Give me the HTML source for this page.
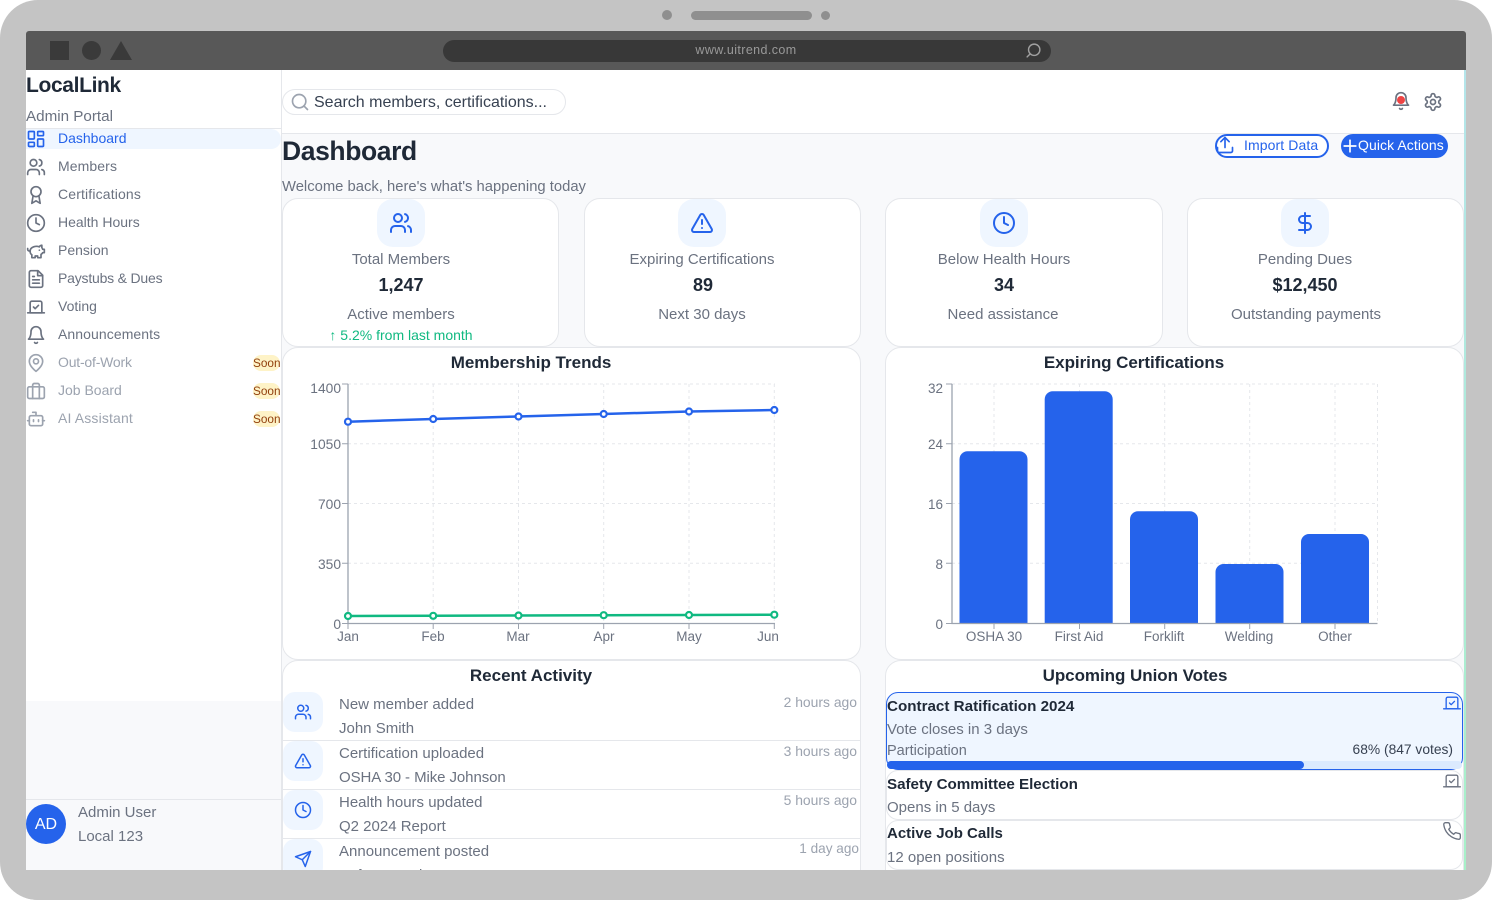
<!DOCTYPE html>
<html lang="en">
<head>
<meta charset="utf-8">
<title>LocalLink Admin Portal</title>
<style>
html,body{margin:0;padding:0;background:#fff;width:1492px;height:900px;overflow:hidden}
body{font-family:"Liberation Sans",sans-serif;position:relative}
#frame{position:absolute;inset:0;background:#c4c4c4;border-radius:38px;overflow:hidden}
.a{position:absolute;box-sizing:border-box}
.t{position:absolute;white-space:nowrap;line-height:20px;margin-top:-10px;font-size:14px;color:#6b7280}
.c{transform:translateX(-50%)}
.i{position:absolute;fill:none;stroke:currentColor;stroke-width:2;stroke-linecap:round;stroke-linejoin:round;overflow:visible}
.nav{font-size:14px;color:#6b7280}
.dim{color:#9ca3af}
.soon{position:absolute;left:253px;width:27px;height:16px;border-radius:8px;background:#fef3c7;color:#92400e;font-size:11.8px;line-height:17px;text-align:center;white-space:nowrap}
.card{position:absolute;box-sizing:border-box;background:#fff;border:1px solid #e5e7eb;border-radius:16px}
.ib{position:absolute;background:#eff6ff;border-radius:16px}
.h{font-weight:700;font-size:17px;color:#1f2937;margin-top:-9px}
.val{font-weight:700;font-size:18px;color:#1f2937}
.s{font-size:15px;margin-top:-9px}
.l{font-size:13.5px;margin-top:-9px}
.time{font-size:13.9px;color:#9ca3af;margin-top:-9px}
.b{font-weight:700;font-size:15.2px;color:#1f2937;margin-top:-9px}
</style>
</head>
<body>
<svg width="0" height="0" style="position:absolute">
<defs>
<symbol id="dash" viewBox="0 0 24 24"><rect x="3" y="3" width="7" height="9" rx="1"/><rect x="14" y="3" width="7" height="5" rx="1"/><rect x="14" y="12" width="7" height="9" rx="1"/><rect x="3" y="16" width="7" height="5" rx="1"/></symbol>
<symbol id="users" viewBox="0 0 24 24"><path d="M16 21v-2a4 4 0 0 0-4-4H6a4 4 0 0 0-4 4v2"/><circle cx="9" cy="7" r="4"/><path d="M22 21v-2a4 4 0 0 0-3-3.87"/><path d="M16 3.13a4 4 0 0 1 0 7.75"/></symbol>
<symbol id="award" viewBox="0 0 24 24"><circle cx="12" cy="8" r="6"/><path d="M15.477 12.89 17 22l-5-3-5 3 1.523-9.11"/></symbol>
<symbol id="clock" viewBox="0 0 24 24"><circle cx="12" cy="12" r="10"/><path d="M12 6v6l4 2"/></symbol>
<symbol id="pig" viewBox="0 0 24 24"><path d="M19 5c-1.5 0-2.8 1.4-3 2-3.5-1.5-11-.3-11 5 0 1.8 0 3 2 4.5V20h4v-2h3v2h4v-4c1-.5 1.7-1 2-2h2v-4h-2c0-1-.5-1.5-1-2V5z"/><path d="M2 9v1c0 1.1.9 2 2 2h1"/><path d="M16 11h.01"/></symbol>
<symbol id="file" viewBox="0 0 24 24"><path d="M14.5 2H6a2 2 0 0 0-2 2v16a2 2 0 0 0 2 2h12a2 2 0 0 0 2-2V7.5L14.5 2z"/><path d="M14 2v6h6"/><path d="M16 13H8"/><path d="M16 17H8"/><path d="M10 9H8"/></symbol>
<symbol id="vote" viewBox="0 0 24 24"><path d="m9 12 2 2 4-4"/><path d="M5 7c0-1.1.9-2 2-2h10a2 2 0 0 1 2 2v12H5V7Z"/><path d="M22 19H2"/></symbol>
<symbol id="bell" viewBox="0 0 24 24"><path d="M6 8a6 6 0 0 1 12 0c0 7 3 9 3 9H3s3-2 3-9"/><path d="M10.3 21a1.94 1.94 0 0 0 3.4 0"/></symbol>
<symbol id="pin" viewBox="0 0 24 24"><path d="M20 10c0 6-8 12-8 12s-8-6-8-12a8 8 0 0 1 16 0Z"/><circle cx="12" cy="10" r="3"/></symbol>
<symbol id="brief" viewBox="0 0 24 24"><rect x="2" y="7" width="20" height="14" rx="2"/><path d="M16 21V5a2 2 0 0 0-2-2h-4a2 2 0 0 0-2 2v16"/></symbol>
<symbol id="bot" viewBox="0 0 24 24"><path d="M12 8V4H8"/><rect x="4" y="8" width="16" height="12" rx="2"/><path d="M2 14h2"/><path d="M20 14h2"/><path d="M15 13v2"/><path d="M9 13v2"/></symbol>
<symbol id="search" viewBox="0 0 24 24"><circle cx="11" cy="11" r="8"/><path d="m21 21-4.3-4.3"/></symbol>
<symbol id="alert" viewBox="0 0 24 24"><path d="m21.73 18-8-14a2 2 0 0 0-3.48 0l-8 14A2 2 0 0 0 4 21h16a2 2 0 0 0 1.73-3Z"/><path d="M12 9v4"/><path d="M12 17h.01"/></symbol>
<symbol id="dollar" viewBox="0 0 24 24"><path d="M12 2v20"/><path d="M17 5H9.5a3.5 3.5 0 0 0 0 7h5a3.5 3.5 0 0 1 0 7H6"/></symbol>
<symbol id="send" viewBox="0 0 24 24"><path d="m22 2-7 20-4-9-9-4Z"/><path d="M22 2 11 13"/></symbol>
<symbol id="phone" viewBox="0 0 24 24"><path d="M22 16.92v3a2 2 0 0 1-2.18 2 19.79 19.79 0 0 1-8.63-3.07 19.5 19.5 0 0 1-6-6 19.79 19.79 0 0 1-3.07-8.67A2 2 0 0 1 4.11 2h3a2 2 0 0 1 2 1.72 12.84 12.84 0 0 0 .7 2.81 2 2 0 0 1-.45 2.11L8.09 9.91a16 16 0 0 0 6 6l1.27-1.27a2 2 0 0 1 2.11-.45 12.84 12.84 0 0 0 2.81.7A2 2 0 0 1 22 16.92z"/></symbol>
<symbol id="gear" viewBox="0 0 24 24"><path d="M12.22 2h-.44a2 2 0 0 0-2 2v.18a2 2 0 0 1-1 1.73l-.43.25a2 2 0 0 1-2 0l-.15-.08a2 2 0 0 0-2.73.73l-.22.38a2 2 0 0 0 .73 2.73l.15.1a2 2 0 0 1 1 1.72v.51a2 2 0 0 1-1 1.74l-.15.09a2 2 0 0 0-.73 2.73l.22.38a2 2 0 0 0 2.73.73l.15-.08a2 2 0 0 1 2 0l.43.25a2 2 0 0 1 1 1.73V20a2 2 0 0 0 2 2h.44a2 2 0 0 0 2-2v-.18a2 2 0 0 1 1-1.73l.43-.25a2 2 0 0 1 2 0l.15.08a2 2 0 0 0 2.73-.73l.22-.39a2 2 0 0 0-.73-2.73l-.15-.08a2 2 0 0 1-1-1.74v-.5a2 2 0 0 1 1-1.74l.15-.09a2 2 0 0 0 .73-2.73l-.22-.38a2 2 0 0 0-2.73-.73l-.15.08a2 2 0 0 1-2 0l-.43-.25a2 2 0 0 1-1-1.73V4a2 2 0 0 0-2-2z"/><circle cx="12" cy="12" r="3"/></symbol>
<symbol id="upload" viewBox="0 0 24 24"><path d="M21 15v4a2 2 0 0 1-2 2H5a2 2 0 0 1-2-2v-4"/><path d="m17 8-5-5-5 5"/><path d="M12 3v12"/></symbol>
<symbol id="plus" viewBox="0 0 24 24"><path d="M5 12h14"/><path d="M12 5v14"/></symbol>
</defs>
</svg>

<div id="frame">
  <!-- device chrome -->
  <div class="a" style="left:662px;top:10px;width:10px;height:10px;border-radius:50%;background:#8f8f8f"></div>
  <div class="a" style="left:691px;top:11px;width:121px;height:9px;border-radius:5px;background:#8f8f8f"></div>
  <div class="a" style="left:821px;top:11px;width:9px;height:9px;border-radius:50%;background:#8f8f8f"></div>
  <div class="a" style="left:26px;top:31px;width:1440px;height:39px;background:#585858;border-radius:3px 3px 0 0"></div>
  <div class="a" style="left:50px;top:41px;width:19px;height:19px;background:#3a3a3a"></div>
  <div class="a" style="left:82px;top:41px;width:19px;height:19px;border-radius:50%;background:#3a3a3a"></div>
  <svg class="a" style="left:110px;top:41px" width="22" height="19"><path d="M11 0 22 19H0Z" fill="#3a3a3a"/></svg>
  <div class="a" style="left:443px;top:40px;width:608px;height:22px;border-radius:11px;background:#383838"></div>
  <div class="t c" style="left:746px;top:50px;font-size:12.5px;color:#999;letter-spacing:.4px">www.uitrend.com</div>
  <svg class="i" style="left:1025px;top:42px;color:#a0a0a0;stroke-width:2;transform:scaleX(-1)" width="17" height="17"><use href="#search"/></svg>

  <!-- app -->
  <div class="a" style="left:26px;top:70px;width:1440px;height:800px;background:linear-gradient(#b5e5ea,#a8f0c8)"></div>
  <div class="a" style="left:282px;top:70px;width:1182px;height:800px;background:#f8f9fb"></div>

  <!-- sidebar -->
  <div class="a" style="left:26px;top:70px;width:255px;height:631px;background:#fff"></div>
  <div class="a" style="left:26px;top:701px;width:255px;height:169px;background:#f8f9fb"></div>
  <div class="a" style="left:281px;top:70px;width:1px;height:800px;background:#e5e7eb"></div>
  <div class="t" style="left:26px;top:86px;font-size:21px;font-weight:700;color:#1f2937;letter-spacing:-.35px">LocalLink</div>
  <div class="t" style="left:26px;top:116px;font-size:15.2px;margin-top:-9px;color:#6b7280">Admin Portal</div>
  <div class="a" style="left:26px;top:128px;width:255px;height:1px;background:#e5e7eb"></div>
  <div class="a" style="left:26px;top:129px;width:255px;height:20px;background:#eff6ff;border-radius:0 10px 10px 0"></div>

  <svg class="i" style="left:26px;top:129px;color:#2563eb" width="20" height="20"><use href="#dash"/></svg>
  <div class="t nav" style="left:58px;top:138px;color:#2563eb">Dashboard</div>
  <svg class="i" style="left:26px;top:157px;color:#6b7280" width="20" height="20"><use href="#users"/></svg>
  <div class="t nav" style="left:58px;top:166px;letter-spacing:.1px">Members</div>
  <svg class="i" style="left:26px;top:185px;color:#6b7280" width="20" height="20"><use href="#award"/></svg>
  <div class="t nav" style="left:58px;top:194px;letter-spacing:.15px">Certifications</div>
  <svg class="i" style="left:26px;top:213px;color:#6b7280" width="20" height="20"><use href="#clock"/></svg>
  <div class="t nav" style="left:58px;top:222px">Health Hours</div>
  <svg class="i" style="left:26px;top:241px;color:#6b7280" width="20" height="20"><use href="#pig"/></svg>
  <div class="t nav" style="left:58px;top:250px">Pension</div>
  <svg class="i" style="left:26px;top:269px;color:#6b7280" width="20" height="20"><use href="#file"/></svg>
  <div class="t nav" style="left:58px;top:278px;letter-spacing:-.2px">Paystubs &amp; Dues</div>
  <svg class="i" style="left:26px;top:297px;color:#6b7280" width="20" height="20"><use href="#vote"/></svg>
  <div class="t nav" style="left:58px;top:306px">Voting</div>
  <svg class="i" style="left:26px;top:325px;color:#6b7280" width="20" height="20"><use href="#bell"/></svg>
  <div class="t nav" style="left:58px;top:334px;letter-spacing:.08px">Announcements</div>
  <svg class="i" style="left:26px;top:353px;color:#9ca3af" width="20" height="20"><use href="#pin"/></svg>
  <div class="t nav dim" style="left:58px;top:362px;letter-spacing:-.2px">Out-of-Work</div>
  <div class="soon" style="top:355px">Soon</div>
  <svg class="i" style="left:26px;top:381px;color:#9ca3af" width="20" height="20"><use href="#brief"/></svg>
  <div class="t nav dim" style="left:58px;top:390px">Job Board</div>
  <div class="soon" style="top:383px">Soon</div>
  <svg class="i" style="left:26px;top:409px;color:#9ca3af" width="20" height="20"><use href="#bot"/></svg>
  <div class="t nav dim" style="left:58px;top:418px;letter-spacing:.15px">AI Assistant</div>
  <div class="soon" style="top:411px">Soon</div>

  <div class="a" style="left:26px;top:799px;width:255px;height:1px;background:#e5e7eb"></div>
  <div class="a" style="left:26px;top:804px;width:40px;height:40px;border-radius:50%;background:#2563eb;color:#fff;font-size:16px;line-height:41px;text-align:center">AD</div>
  <div class="t s" style="left:78px;top:812px">Admin User</div>
  <div class="t s" style="left:78px;top:836px">Local 123</div>

  <!-- top bar -->
  <div class="a" style="left:282px;top:70px;width:1182px;height:64px;background:#fff;border-bottom:1px solid #e5e7eb"></div>
  <div class="a" style="left:282px;top:89px;width:284px;height:26px;border:1px solid #e5e7eb;border-radius:13px;background:#fff"></div>
  <svg class="i" style="left:290px;top:92px;color:#9ca3af" width="20" height="20"><use href="#search"/></svg>
  <div class="t" style="left:314px;top:102px;font-size:16px;margin-top:-9px;color:#374151">Search members, certifications...</div>
  <svg class="i" style="left:1391px;top:91px;color:#6b7280" width="20" height="20"><use href="#bell"/></svg>
  <div class="a" style="left:1397px;top:96px;width:8px;height:8px;border-radius:50%;background:#ef4444"></div>
  <svg class="i" style="left:1423px;top:92px;color:#6b7280" width="20" height="20"><use href="#gear"/></svg>

  <!-- page heading -->
  <div class="t" style="left:282px;top:151px;font-size:26.5px;font-weight:700;color:#1f2937;letter-spacing:-.4px">Dashboard</div>
  <div class="t" style="left:282px;top:186px;font-size:14.8px;margin-top:-9px">Welcome back, here's what's happening today</div>
  <div class="a" style="left:1215px;top:134px;width:114px;height:24px;border:2px solid #2563eb;border-radius:12px;background:#fff"></div>
  <svg class="i" style="left:1215px;top:135px;color:#2563eb" width="20" height="20"><use href="#upload"/></svg>
  <div class="t" style="left:1244px;top:145px;font-size:14px;color:#2563eb;letter-spacing:.1px">Import Data</div>
  <div class="a" style="left:1341px;top:134px;width:107px;height:24px;border-radius:12px;background:#2563eb"></div>
  <svg class="i" style="left:1340px;top:136px;color:#fff" width="20" height="20"><use href="#plus"/></svg>
  <div class="t" style="left:1358px;top:145px;font-size:14px;color:#fff;letter-spacing:.08px">Quick Actions</div>

  <!-- stat cards -->
  <div class="card" style="left:282px;top:198px;width:277px;height:149px"></div>
  <div class="card" style="left:584px;top:198px;width:277px;height:149px"></div>
  <div class="card" style="left:885px;top:198px;width:278px;height:149px"></div>
  <div class="card" style="left:1187px;top:198px;width:277px;height:149px"></div>

  <div class="ib" style="left:377px;top:199px;width:48px;height:48px"></div>
  <svg class="i" style="left:389px;top:211px;color:#2563eb" width="24" height="24"><use href="#users"/></svg>
  <div class="t c s" style="left:401px;top:259px">Total Members</div>
  <div class="t c val" style="left:401px;top:285px">1,247</div>
  <div class="t c s" style="left:401px;top:314px">Active members</div>
  <div class="t c" style="left:401px;top:335px;color:#10b981;font-size:14px">↑ 5.2% from last month</div>

  <div class="ib" style="left:678px;top:199px;width:48px;height:48px"></div>
  <svg class="i" style="left:690px;top:211px;color:#2563eb" width="24" height="24"><use href="#alert"/></svg>
  <div class="t c s" style="left:702px;top:259px">Expiring Certifications</div>
  <div class="t c val" style="left:703px;top:285px">89</div>
  <div class="t c s" style="left:702px;top:314px">Next 30 days</div>

  <div class="ib" style="left:980px;top:199px;width:48px;height:48px"></div>
  <svg class="i" style="left:992px;top:211px;color:#2563eb" width="24" height="24"><use href="#clock"/></svg>
  <div class="t c s" style="left:1004px;top:259px">Below Health Hours</div>
  <div class="t c val" style="left:1004px;top:285px">34</div>
  <div class="t c s" style="left:1003px;top:314px">Need assistance</div>

  <div class="ib" style="left:1281px;top:199px;width:48px;height:48px"></div>
  <svg class="i" style="left:1293px;top:211px;color:#2563eb" width="24" height="24"><use href="#dollar"/></svg>
  <div class="t c s" style="left:1305px;top:259px">Pending Dues</div>
  <div class="t c val" style="left:1305px;top:285px">$12,450</div>
  <div class="t c s" style="left:1306px;top:314px">Outstanding payments</div>

  <!-- line chart card -->
  <div class="card" style="left:282px;top:347px;width:579px;height:313px"></div>
  <div class="t c h" style="left:531px;top:362px">Membership Trends</div>
  <svg class="a" style="left:282px;top:347px" width="579" height="313" fill="none">
    <g stroke="#e5e7eb" stroke-dasharray="3 3">
      <path d="M66 37H493M66 96.7H493M66 156.5H493M66 216.3H493"/>
      <path d="M151.2 37V276.5M236.5 37V276.5M321.7 37V276.5M407 37V276.5M492.3 37V276.5"/>
    </g>
    <path d="M66 37V276.5H493" stroke="#9ca3af" stroke-width="1.3"/>
    <path d="M60 37H66M60 96.7H66M60 156.5H66M60 216.3H66M60 276.5H66M66 276.5V282M151.2 276.5V282M236.5 276.5V282M321.7 276.5V282M407 276.5V282M492.3 276.5V282" stroke="#9ca3af"/>
    <path d="M66 74.7 151.2 72 236.5 69.5 321.7 67 407 64.5 492.3 63" stroke="#2563eb" stroke-width="2.5"/>
    <g stroke="#2563eb" stroke-width="2.2" fill="#fff"><circle cx="66" cy="74.7" r="3"/><circle cx="151.2" cy="72" r="3"/><circle cx="236.5" cy="69.5" r="3"/><circle cx="321.7" cy="67" r="3"/><circle cx="407" cy="64.5" r="3"/><circle cx="492.3" cy="63" r="3"/></g>
    <path d="M66 269 151.2 268.8 236.5 268.5 321.7 268.2 407 268 492.3 267.7" stroke="#10b981" stroke-width="2.5"/>
    <g stroke="#10b981" stroke-width="2.2" fill="#fff"><circle cx="66" cy="269" r="3"/><circle cx="151.2" cy="268.8" r="3"/><circle cx="236.5" cy="268.5" r="3"/><circle cx="321.7" cy="268.2" r="3"/><circle cx="407" cy="268" r="3"/><circle cx="492.3" cy="267.7" r="3"/></g>
  </svg>
  <div class="t l" style="right:1151px;top:388px;font-size:13.8px">1400</div>
  <div class="t l" style="right:1151px;top:444px;font-size:13.8px">1050</div>
  <div class="t l" style="right:1151px;top:504px;font-size:13.8px">700</div>
  <div class="t l" style="right:1151px;top:564px;font-size:13.8px">350</div>
  <div class="t l" style="right:1151px;top:624px;font-size:13.8px">0</div>
  <div class="t c l" style="left:348px;top:636px">Jan</div>
  <div class="t c l" style="left:433px;top:636px">Feb</div>
  <div class="t c l" style="left:518px;top:636px">Mar</div>
  <div class="t c l" style="left:604px;top:636px">Apr</div>
  <div class="t c l" style="left:689px;top:636px">May</div>
  <div class="t c l" style="left:768px;top:636px">Jun</div>

  <!-- bar chart card -->
  <div class="card" style="left:885px;top:347px;width:579px;height:313px"></div>
  <div class="t c h" style="left:1134px;top:362px;letter-spacing:-.05px">Expiring Certifications</div>
  <svg class="a" style="left:885px;top:347px" width="579" height="313" fill="none">
    <g stroke="#e5e7eb" stroke-dasharray="3 3">
      <path d="M67 37H492.5M67 96.7H492.5M67 156.5H492.5M67 216.3H492.5"/>
      <path d="M109 37V276.5M194.5 37V276.5M279.7 37V276.5M364.7 37V276.5M450 37V276.5M492.5 37V276.5"/>
    </g>
    <g fill="#2563eb">
      <path d="M74.5 276.5V112.3a8 8 0 0 1 8-8h52a8 8 0 0 1 8 8V276.5Z"/>
      <path d="M159.7 276.5V52.3a8 8 0 0 1 8-8h52a8 8 0 0 1 8 8V276.5Z"/>
      <path d="M245 276.5V172.3a8 8 0 0 1 8-8h52a8 8 0 0 1 8 8V276.5Z"/>
      <path d="M330.5 276.5V225a8 8 0 0 1 8-8h52a8 8 0 0 1 8 8V276.5Z"/>
      <path d="M416 276.5V195a8 8 0 0 1 8-8h52a8 8 0 0 1 8 8V276.5Z"/>
    </g>
    <path d="M67 37V276.5H492.5" stroke="#9ca3af" stroke-width="1.3"/>
    <path d="M61 37H67M61 96.7H67M61 156.5H67M61 216.3H67M61 276.5H67M109 276.5V282M194.5 276.5V282M279.7 276.5V282M364.7 276.5V282M450 276.5V282" stroke="#9ca3af"/>
  </svg>
  <div class="t l" style="right:549px;top:388px">32</div>
  <div class="t l" style="right:549px;top:444px">24</div>
  <div class="t l" style="right:549px;top:504px">16</div>
  <div class="t l" style="right:549px;top:564px">8</div>
  <div class="t l" style="right:549px;top:624px">0</div>
  <div class="t c l" style="left:994px;top:636px">OSHA 30</div>
  <div class="t c l" style="left:1079px;top:636px">First Aid</div>
  <div class="t c l" style="left:1164px;top:636px">Forklift</div>
  <div class="t c l" style="left:1249px;top:636px">Welding</div>
  <div class="t c l" style="left:1335px;top:636px">Other</div>

  <!-- activity card -->
  <div class="card" style="left:282px;top:660px;width:579px;height:240px"></div>
  <div class="t c h" style="left:531px;top:675px">Recent Activity</div>

  <div class="ib" style="left:283px;top:692px;width:40px;height:40px;border-radius:12px"></div>
  <svg class="i" style="left:294px;top:703px;color:#2563eb" width="18" height="18"><use href="#users"/></svg>
  <div class="t s" style="left:339px;top:704px">New member added</div>
  <div class="t s" style="left:339px;top:728px">John Smith</div>
  <div class="t time" style="right:635px;top:701px">2 hours ago</div>
  <div class="a" style="left:283px;top:740px;width:577px;height:1px;background:#e5e7eb"></div>

  <div class="ib" style="left:283px;top:741px;width:40px;height:40px;border-radius:12px"></div>
  <svg class="i" style="left:294px;top:752px;color:#2563eb" width="18" height="18"><use href="#alert"/></svg>
  <div class="t s" style="left:339px;top:753px">Certification uploaded</div>
  <div class="t s" style="left:339px;top:777px;letter-spacing:-.08px">OSHA 30 - Mike Johnson</div>
  <div class="t time" style="right:635px;top:750px">3 hours ago</div>
  <div class="a" style="left:283px;top:789px;width:577px;height:1px;background:#e5e7eb"></div>

  <div class="ib" style="left:283px;top:790px;width:40px;height:40px;border-radius:12px"></div>
  <svg class="i" style="left:294px;top:801px;color:#2563eb" width="18" height="18"><use href="#clock"/></svg>
  <div class="t s" style="left:339px;top:802px">Health hours updated</div>
  <div class="t s" style="left:339px;top:826px">Q2 2024 Report</div>
  <div class="t time" style="right:635px;top:799px">5 hours ago</div>
  <div class="a" style="left:283px;top:838px;width:577px;height:1px;background:#e5e7eb"></div>

  <div class="ib" style="left:283px;top:839px;width:40px;height:40px;border-radius:12px"></div>
  <svg class="i" style="left:294px;top:850px;color:#2563eb" width="18" height="18"><use href="#send"/></svg>
  <div class="t s" style="left:339px;top:851px">Announcement posted</div>
  <div class="t s" style="left:339px;top:875px">Safety Meeting - June 20</div>
  <div class="t time" style="right:633px;top:848px;font-size:13.6px">1 day ago</div>

  <!-- votes card -->
  <div class="card" style="left:885px;top:660px;width:579px;height:240px"></div>
  <div class="t c h" style="left:1135px;top:675px;letter-spacing:-.05px">Upcoming Union Votes</div>

  <div class="a" style="left:886px;top:692px;width:577px;height:78px;background:#eff6ff;border:1px solid #2563eb;border-radius:12px"></div>
  <div class="a" style="left:887px;top:761px;width:575px;height:8px;background:#dbeafe;border-radius:4px"></div>
  <div class="a" style="left:887px;top:761px;width:417px;height:8px;background:#2563eb;border-radius:4px"></div>
  <div class="t b" style="left:887px;top:706px">Contract Ratification 2024</div>
  <div class="t s" style="left:887px;top:729px">Vote closes in 3 days</div>
  <div class="t" style="left:887px;top:750px;font-size:14.5px;margin-top:-9px">Participation</div>
  <div class="t" style="right:39px;top:750px;font-size:13.8px;color:#374151">68% (847 votes)</div>
  <svg class="i" style="left:1442px;top:693px;color:#2563eb;stroke-width:1.6" width="20" height="20"><use href="#vote"/></svg>

  <div class="a" style="left:886px;top:770px;width:577px;height:50px;background:#fff;border:1px solid #e5e7eb;border-radius:12px"></div>
  <div class="t b" style="left:887px;top:784px;letter-spacing:-.03px">Safety Committee Election</div>
  <div class="t s" style="left:887px;top:807px">Opens in 5 days</div>
  <svg class="i" style="left:1442px;top:771px;color:#6b7280;stroke-width:1.6" width="20" height="20"><use href="#vote"/></svg>

  <div class="a" style="left:886px;top:820px;width:577px;height:50px;background:#fff;border:1px solid #e5e7eb;border-radius:12px"></div>
  <div class="t b" style="left:887px;top:833px;font-size:15px;">Active Job Calls</div>
  <div class="t s" style="left:887px;top:857px">12 open positions</div>
  <svg class="i" style="left:1442px;top:821px;color:#6b7280;stroke-width:1.6" width="20" height="20"><use href="#phone"/></svg>

  <!-- bezel bottom -->
  <div class="a" style="left:0;top:870px;width:1492px;height:30px;background:#c4c4c4"></div>
</div>
</body>
</html>
